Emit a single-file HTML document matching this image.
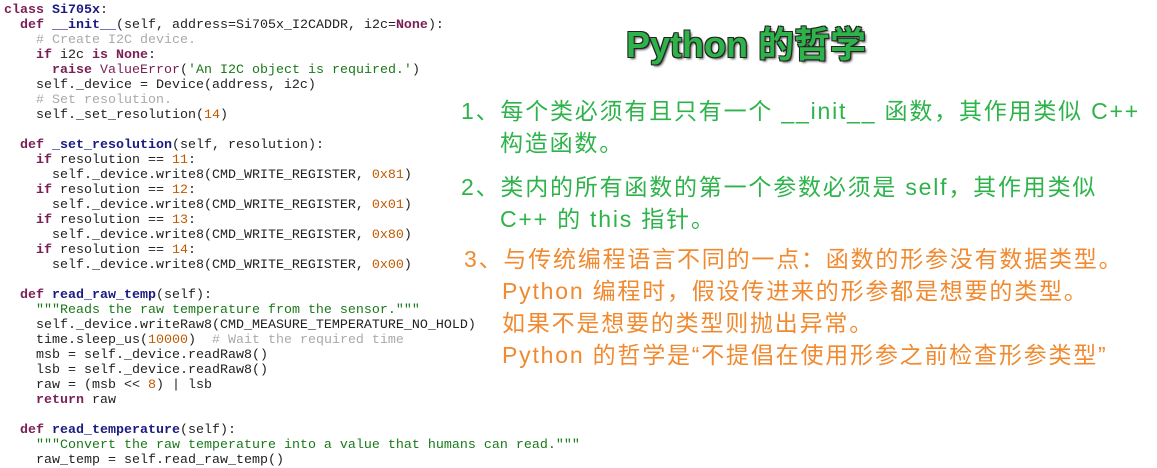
<!DOCTYPE html>
<html><head><meta charset="utf-8"><style>
body{margin:0;width:1157px;height:466px;background:#fff;position:relative;overflow:hidden}
pre{position:absolute;left:4px;top:3px;margin:0;font:13.33px/15px "Liberation Mono","DejaVu Sans Mono",monospace;color:#222}
.k{color:#7a1f56;font-weight:bold}.f{color:#1a1a80;font-weight:bold}.s{color:#1a7a1a}.c{color:#aaa}.n{color:#c05a00}
.t{position:absolute;font-family:"Liberation Sans","Noto Sans CJK SC",sans-serif;font-size:23px;letter-spacing:1.8px;line-height:32px;white-space:nowrap}
.g{color:#2db34a}.o{color:#f08a30}
.h{position:absolute;left:626px;top:24px;font:bold 36px/42px "Liberation Sans","Noto Sans CJK SC",sans-serif;color:#2db34a;text-shadow:-1px -1px 0 #222,1px -1px 0 #222,-1px 1px 0 #222,1px 1px 0 #222,2px 2px 2px #555}
</style></head><body>
<pre><span class="k">class</span> <span class="f">Si705x</span>:
  <span class="k">def</span> <span class="f">__init__</span>(self, address=Si705x_I2CADDR, i2c=<span class="k">None</span>):
    <span class="c"># Create I2C device.</span>
    <span class="k">if</span> i2c <span class="k">is</span> <span class="k">None</span>:
      <span class="k">raise</span> <span class="k" style="font-weight:normal">ValueError</span>(<span class="s">'An I2C object is required.'</span>)
    self._device = Device(address, i2c)
    <span class="c"># Set resolution.</span>
    self._set_resolution(<span class="n">14</span>)

  <span class="k">def</span> <span class="f">_set_resolution</span>(self, resolution):
    <span class="k">if</span> resolution == <span class="n">11</span>:
      self._device.write8(CMD_WRITE_REGISTER, <span class="n">0x81</span>)
    <span class="k">if</span> resolution == <span class="n">12</span>:
      self._device.write8(CMD_WRITE_REGISTER, <span class="n">0x01</span>)
    <span class="k">if</span> resolution == <span class="n">13</span>:
      self._device.write8(CMD_WRITE_REGISTER, <span class="n">0x80</span>)
    <span class="k">if</span> resolution == <span class="n">14</span>:
      self._device.write8(CMD_WRITE_REGISTER, <span class="n">0x00</span>)

  <span class="k">def</span> <span class="f">read_raw_temp</span>(self):
    <span class="s">"""Reads the raw temperature from the sensor."""</span>
    self._device.writeRaw8(CMD_MEASURE_TEMPERATURE_NO_HOLD)
    time.sleep_us(<span class="n">10000</span>)  <span class="c"># Wait the required time</span>
    msb = self._device.readRaw8()
    lsb = self._device.readRaw8()
    raw = (msb &lt;&lt; <span class="n">8</span>) | lsb
    <span class="k">return</span> raw

  <span class="k">def</span> <span class="f">read_temperature</span>(self):
    <span class="s">"""Convert the raw temperature into a value that humans can read."""</span>
    raw_temp = self.read_raw_temp()
</pre>
<div class="h">Python 的哲学</div>
<div class="t g" style="left:461px;top:95px">1、每个类必须有且只有一个 __init__ 函数，其作用类似 C++</div>
<div class="t g" style="left:500px;top:127px">构造函数。</div>
<div class="t g" style="left:461px;top:171px">2、类内的所有函数的第一个参数必须是 self，其作用类似</div>
<div class="t g" style="left:500px;top:203px">C++ 的 this 指针。</div>
<div class="t o" style="left:464px;top:243px">3、与传统编程语言不同的一点：函数的形参没有数据类型。</div>
<div class="t o" style="left:502px;top:275px">Python 编程时，假设传进来的形参都是想要的类型。</div>
<div class="t o" style="left:502px;top:307px">如果不是想要的类型则抛出异常。</div>
<div class="t o" style="left:502px;top:339px">Python 的哲学是“不提倡在使用形参之前检查形参类型”</div>
</body></html>
